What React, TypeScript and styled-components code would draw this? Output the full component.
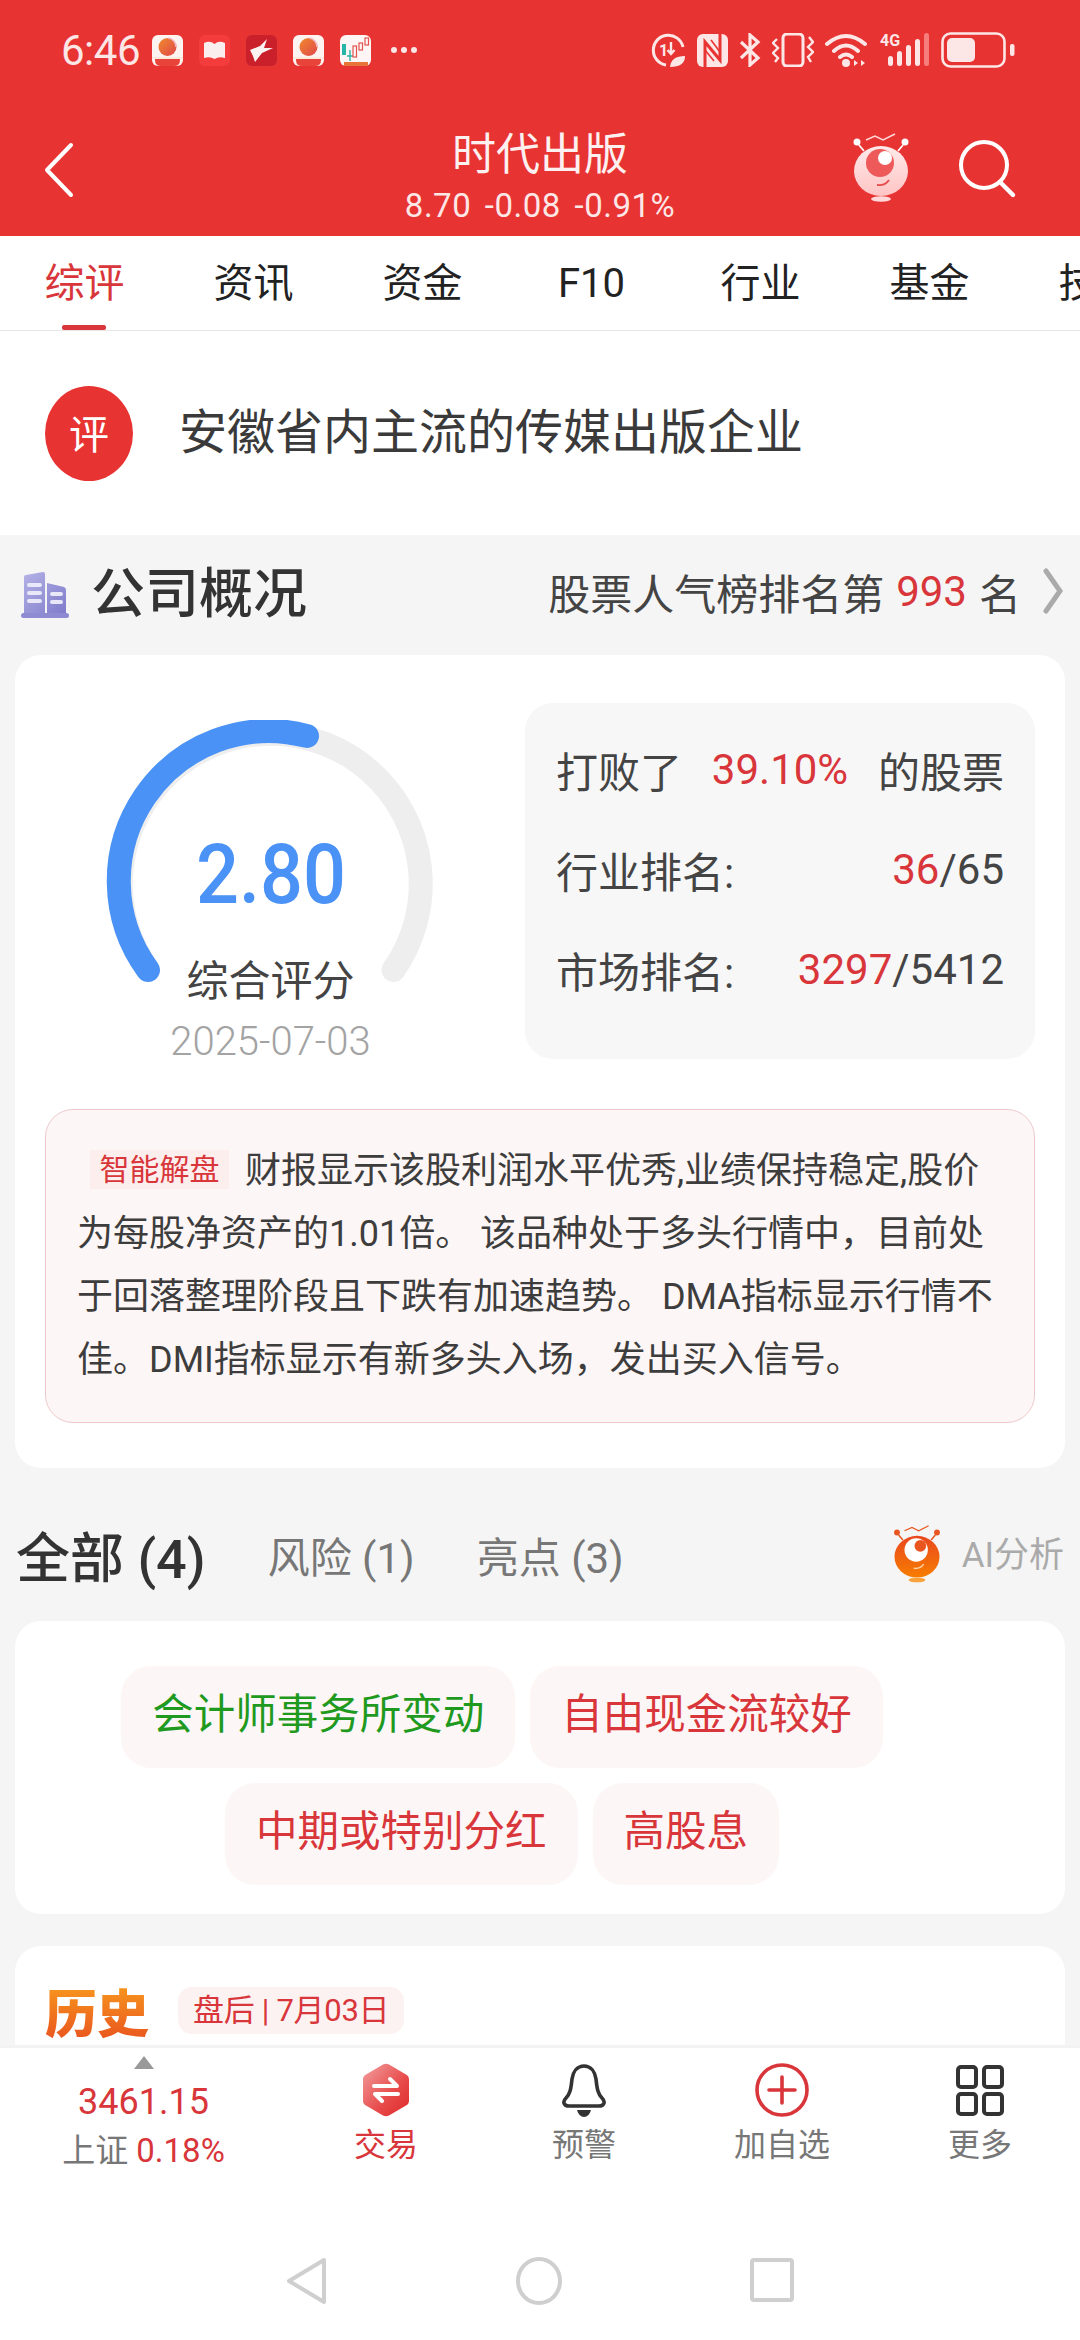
import styled, { createGlobalStyle } from 'styled-components';

const RED = '#d8363a';
const BRAND = '#e83333';
const SANS = `Roboto, "Noto Sans CJK SC", sans-serif`;

const GlobalStyle = createGlobalStyle`
  html, body { margin: 0; padding: 0; background: #fff; }
  body { font-family: ${SANS}; }
  * { box-sizing: border-box; }
`;

const Page = styled.div`
  width: 1080px;
  height: 2340px;
  display: flex;
  flex-direction: column;
  background: #f5f5f5;
  overflow: hidden;
`;

const Header = styled.header`
  background: ${BRAND};
  color: #fff;
  height: 236px;
`;

const StatusBar = styled.div`
  height: 100px;
  padding: 0 65px 0 61px;
  display: flex;
  align-items: center;
`;

const Clock = styled.span`
  font-size: 42px;
  font-weight: 400;
  color: #fde6e6;
  width: 91px;
  letter-spacing: -0.5px;
`;

const NoticeIcons = styled.div`
  display: flex;
  align-items: center;
  gap: 16px;
`;

const StatusIcons = styled.div`
  margin-left: auto;
  display: flex;
  align-items: center;
  gap: 11px;
`;

const TitleBar = styled.div`
  height: 136px;
  display: grid;
  grid-template-columns: 1fr auto 1fr;
  align-items: start;
`;

const BackButton = styled.div`
  padding: 42px 0 0 44px;
`;

const TitleBlock = styled.div`
  text-align: center;
`;

const StockName = styled.div`
  font-size: 44px;
  line-height: 52px;
  margin-top: 29px;
  color: #fdf0f0;
`;

const StockQuote = styled.div`
  font-size: 33px;
  line-height: 40px;
  margin-top: 5px;
  color: #fde6e6;
  letter-spacing: 0.5px;
  word-spacing: 5px;
`;

const TitleActions = styled.div`
  display: flex;
  justify-content: flex-end;
  align-items: flex-start;
  gap: 46px;
  padding: 33px 63px 0 0;
`;

const Tabs = styled.nav`
  height: 95px;
  display: flex;
  background: #fff;
  border-bottom: 1px solid #e6e6e6;
  overflow: hidden;
`;

const Tab = styled.div<{ $active?: boolean }>`
  flex: 0 0 169px;
  position: relative;
  text-align: center;
  font-size: 40px;
  line-height: 95px;
  color: ${(p) => (p.$active ? RED : '#222')};

  ${(p) =>
    p.$active &&
    `&::after {
      content: '';
      position: absolute;
      left: 62px;
      bottom: 0;
      width: 44px;
      height: 5px;
      border-radius: 2px;
      background: ${RED};
    }`}
`;

const Content = styled.main`
  flex: 1;
  min-height: 0;
  overflow: hidden;
`;

const Summary = styled.section`
  height: 204px;
  background: #fff;
  display: flex;
  align-items: center;
  padding-left: 45px;
  gap: 46px;
`;

const SummaryBadge = styled.div`
  width: 88px;
  height: 95px;
  border-radius: 50%;
  background: ${BRAND};
  color: #fff;
  font-size: 40px;
  padding-bottom: 3px;
  display: flex;
  align-items: center;
  justify-content: center;
`;

const SummaryText = styled.div`
  font-size: 48px;
  color: #3a3a3a;
  margin-bottom: 10px;
`;

const SectionHead = styled.div`
  height: 120px;
  display: flex;
  align-items: center;
  padding: 0 17px 8px 21px;

  > svg {
    margin-top: 8px;
  }
`;

const SectionTitle = styled.h2`
  margin: 0 0 4px 22px;
  font-size: 54px;
  font-weight: 500;
  color: #333;
`;

const RankLink = styled.div`
  margin-left: auto;
  display: flex;
  align-items: center;
  font-size: 42px;
  color: #444;
`;

const RedText = styled.span`
  color: ${RED};
`;

const RankNumber = styled(RedText)`
  margin: 0 12px;
`;

const Card = styled.section`
  margin: 0 15px;
  background: #fff;
  border-radius: 26px;
`;

const OverviewCard = styled(Card)`
  padding: 48px 30px 45px;
`;

const OverviewTop = styled.div`
  display: flex;
  align-items: flex-start;
`;

const GaugeColumn = styled.div`
  width: 480px;
  padding-right: 29px;
  display: flex;
  justify-content: center;
`;

const GaugeFace = styled.div`
  position: relative;
  width: 340px;
  text-align: center;

  svg {
    position: absolute;
    top: 17px;
    left: 0;
  }
`;

const Score = styled.div`
  position: relative;
  margin-top: 130px;
  font-size: 84px;
  line-height: 84px;
  font-weight: 500;
  color: #4a92f5;
  transform: scaleX(0.9);
`;

const ScoreLabel = styled.div`
  position: relative;
  margin-top: 40px;
  font-size: 42px;
  line-height: 50px;
  color: #444;
`;

const ScoreDate = styled.div`
  position: relative;
  margin-top: 13px;
  font-size: 40px;
  line-height: 44px;
  color: #a3a3a3;
  font-weight: 300;
`;

const RankPanel = styled.div`
  width: 510px;
  height: 356px;
  padding: 16px 31px 0;
  border-radius: 28px;
  background: #f7f7f7;
`;

const RankRow = styled.div`
  height: 100px;
  display: flex;
  align-items: center;
  justify-content: space-between;
  font-size: 42px;
  color: #444;
`;

const Insight = styled.div`
  margin-top: 45px;
  height: 314px;
  padding: 30px 30px 0 31px;
  border: 1px solid #eec9c9;
  border-radius: 28px;
  background: #fdf6f6;
  font-size: 36px;
  line-height: 63px;
  color: #3d3d3d;
  white-space: nowrap;
`;

const InsightTag = styled.span`
  display: inline-block;
  width: 139px;
  height: 39px;
  margin: 0 16px 0 13px;
  background: #fdeeee;
  color: ${RED};
  font-size: 30px;
  line-height: 39px;
  text-align: center;
  vertical-align: 3px;
`;

const FilterBar = styled.div`
  height: 153px;
  padding: 19px 16px 0;
  display: flex;
  align-items: center;
`;

const FilterItem = styled.span<{ $active?: boolean }>`
  font-size: ${(p) => (p.$active ? 54 : 42)}px;
  font-weight: ${(p) => (p.$active ? 500 : 400)};
  color: ${(p) => (p.$active ? '#333' : '#777')};
  margin-right: 62px;
`;

const AiLink = styled.div`
  margin-left: auto;
  margin-top: 2px;
  display: flex;
  align-items: center;
  gap: 20px;
  font-size: 35px;
  color: #aaa;
`;

const AiText = styled.span`
  margin-bottom: 8px;
`;

const ChipCard = styled(Card)`
  height: 293px;
  padding: 45px 116px 29px 40px;
  display: flex;
  flex-wrap: wrap;
  justify-content: center;
  align-content: flex-start;
  gap: 15px;
`;

const Chip = styled.span<{ $good?: boolean }>`
  height: 102px;
  padding: 0 31px;
  border-radius: 30px;
  background: #fdf6f6;
  color: ${(p) => (p.$good ? '#1f9a1f' : RED)};
  font-size: 41.5px;
  line-height: 98px;
`;

const HistoryCard = styled(Card)`
  margin-top: 32px;
  height: 140px;
  padding: 41px 30px 0;
  display: flex;
  align-items: flex-start;
  border-radius: 26px 26px 0 0;
`;

const HistoryMark = styled.span`
  font-size: 52px;
  line-height: 58px;
  font-weight: 900;
  background: linear-gradient(180deg, #f7941d, #e8501f);
  -webkit-background-clip: text;
  background-clip: text;
  color: transparent;
`;

const HistoryTag = styled.span`
  margin-left: 29px;
  height: 47px;
  padding: 0 15px;
  border-radius: 14px;
  background: #fdf2f2;
  color: ${RED};
  font-size: 31px;
  line-height: 47px;
  letter-spacing: -0.3px;
`;

const Footer = styled.footer`
  background: #fff;
  border-top: 3px solid #f3f3f3;
  height: 295px;
`;

const TabBar = styled.div`
  height: 165px;
  display: grid;
  grid-template-columns: 287px repeat(4, 198px);
`;

const IndexQuote = styled.div`
  padding-top: 8px;
  text-align: center;
`;

const IndexValue = styled.div`
  margin-top: 13px;
  font-size: 36px;
  line-height: 40px;
  color: ${RED};
`;

const IndexName = styled.div`
  margin-top: 9px;
  font-size: 33px;
  line-height: 40px;
  color: #777;
`;

const BarItem = styled.div<{ $active?: boolean }>`
  padding-top: 15px;
  display: flex;
  flex-direction: column;
  align-items: center;
  font-size: 32px;
  line-height: 40px;
  color: ${(p) => (p.$active ? RED : '#777')};

  svg {
    margin-bottom: 8px;
  }
`;

const SystemBar = styled.div`
  height: 127px;
  display: flex;
  justify-content: center;
  align-items: flex-start;
  gap: 188px;
  padding: 44px 0 0 0;
`;

const Building = () => (
  <svg width="48" height="46" viewBox="0 0 48 46">
    <defs>
      <linearGradient id="bld" x1="0" y1="0" x2="1" y2="1">
        <stop offset="0" stopColor="#b4b2e6" />
        <stop offset="1" stopColor="#7f7bcb" />
      </linearGradient>
    </defs>
    <path d="M3 5 Q3 3 5 3 L22 0 Q24 0 24 2 V42 H3Z M26 11 L43 15 Q45 16 45 18 V42 H26Z" fill="url(#bld)" />
    <rect y="41" width="48" height="5" rx="2.5" fill="#8f8bd3" />
    <path d="M8 13h11M8 21h11M8 29h11M31 22h9M31 30h9" stroke="#e9e8f8" strokeWidth="4" strokeLinecap="round" />
  </svg>
);

const Chevron = () => (
  <svg width="20" height="46" viewBox="0 0 20 46" style={{ marginLeft: 22 }}>
    <path d="M3 3 L17 23 L3 43" fill="none" stroke="#aaa" strokeWidth="5" strokeLinecap="round" />
  </svg>
);

const Gauge = () => (
  <svg width="340" height="300" viewBox="0 0 340 300">
    <g transform="translate(-100 -720)" fill="none" strokeWidth="24" strokeLinecap="round">
      <path d="M147 970 A150 150 0 1 1 392.5 970" stroke="#eeeeee" />
      <path d="M147 970 A150 150 0 0 1 306 736" stroke="#4a92f5" />
    </g>
  </svg>
);

const Robot = ({ orange, width, height }: { orange?: boolean; width: number; height: number }) => {
  const id = orange ? 'robotOrange' : 'robotPink';
  const tip = orange ? '#e9551f' : '#ffffff';
  const line = orange ? '#e9551f' : '#ffd9d9';
  const eye = orange ? '#ffffff' : '#ee5a5a';
  const pupil = orange ? '#e9551f' : '#fff';
  return (
    <svg width={width} height={height} viewBox="0 0 60 72">
      <defs>
        <linearGradient id={id} x1="0" y1="0" x2="0" y2="1">
          <stop offset="0" stopColor={orange ? '#e9481f' : '#ffeaea'} />
          <stop offset="1" stopColor={orange ? '#f77d00' : '#ffc4c4'} />
        </linearGradient>
      </defs>
      <circle cx="6" cy="9" r="3.5" fill={tip} />
      <circle cx="54" cy="9" r="3.5" fill={tip} />
      <path d="M8 12 L13 18 M52 12 L47 18" stroke={tip} strokeWidth="1.8" />
      <path d="M15 7 L24 3 L32 7 L44 1" fill="none" stroke={line} strokeWidth="1.4" />
      <ellipse cx="30" cy="38" rx="27" ry="25" fill={`url(#${id})`} />
      <circle cx="29" cy="30" r="14" fill={eye} />
      <circle cx="34" cy="25" r="7" fill={pupil} />
      <path d="M26 52 Q34 53 38 47" fill="none" stroke={orange ? '#ffd0a0' : '#e84a4a'} strokeWidth="1.8" />
      <ellipse cx="30" cy="66" rx="10" ry="2.8" fill={orange ? '#f9a23c' : '#ffd9d9'} />
    </svg>
  );
};

const SquircleApp = ({ children, bg }: { children: React.ReactNode; bg: string }) => (
  <svg width="31" height="31" viewBox="0 0 31 31">
    <rect width="31" height="31" rx="6" fill={bg} />
    {children}
  </svg>
);

const PeachApp = ({ id }: { id: string }) => (
  <SquircleApp bg="#fdf4f2">
    <defs>
      <linearGradient id={id} x1="0" y1="0" x2="1" y2="1">
        <stop offset="0" stopColor="#f08a2c" />
        <stop offset="1" stopColor="#e0474c" />
      </linearGradient>
    </defs>
    <circle cx="15.5" cy="12" r="9" fill={`url(#${id})`} />
    <path d="M16 3 A9 9 0 0 1 24 12" fill="none" stroke="#f5b5c0" strokeWidth="1.5" />
    <path d="M3 24 H28 V25 Q28 31 22 31 H9 Q3 31 3 25Z" fill="#e8443a" />
    <path d="M0 23 H31" stroke="#fbe2c8" strokeWidth="1" />
  </SquircleApp>
);

const NoticeRow = () => (
  <NoticeIcons>
    <PeachApp id="peachA" />
    <SquircleApp bg="#f43c3c">
      <path d="M5 8 Q11 5 15.5 9 Q20 5 26 8 V23 Q20 21 15.5 24 Q11 21 5 23Z" fill="#fbeeee" />
    </SquircleApp>
    <SquircleApp bg="#c9202c">
      <path d="M4 15 L14 11 L21 4 L18 13 L27 13 L16 18 L9 27 Q7 20 4 15Z" fill="#fdf2f2" />
    </SquircleApp>
    <PeachApp id="peachB" />
    <SquircleApp bg="#fdf6f4">
      <rect x="2" y="9" width="4" height="11" fill="#27b5a8" />
      <path d="M10 15v11M7 21h6" stroke="#27b5a8" strokeWidth="1.4" />
      <g fill="none" stroke="#e2554f" strokeWidth="1.2">
        <rect x="13" y="11" width="3.5" height="11" />
        <rect x="19" y="8" width="3.5" height="7" />
        <rect x="25" y="3" width="3.5" height="7" />
      </g>
      <rect x="4" y="27" width="24" height="4" fill="#e8743a" />
    </SquircleApp>
    <svg width="26" height="8" viewBox="0 0 26 8" style={{ marginLeft: 4 }}>
      <g fill="#fbe6e6">
        <circle cx="3" cy="4" r="3" />
        <circle cx="13" cy="4" r="3" />
        <circle cx="23" cy="4" r="3" />
      </g>
    </svg>
  </NoticeIcons>
);

const StatusRow = () => (
  <StatusIcons>
    <svg width="35" height="35" viewBox="0 0 35 35">
      <path d="M32 14 A15 15 0 1 0 15 32" fill="none" stroke="#fde6e6" strokeWidth="3" />
      <text x="8" y="23" fontSize="16" fontWeight="700" fill="#fde6e6" fontFamily="Roboto">1</text>
      <path d="M20 9v12M16.5 17l3.5 4 3.5-4" fill="none" stroke="#fde6e6" strokeWidth="2.4" />
      <path d="M19 34 Q20 23 34 23 Q34 34 19 34Z" fill="#fde6e6" />
    </svg>
    <svg width="31" height="33" viewBox="0 0 31 33">
      <rect width="31" height="33" rx="6" fill="#fde6e6" />
      <path d="M8 33V8L23 26V0" fill="none" stroke={BRAND} strokeWidth="3" />
      <path d="M14 6L23 18M8 16L17 27" fill="none" stroke={BRAND} strokeWidth="1.6" />
    </svg>
    <svg width="22" height="34" viewBox="0 0 22 34">
      <path d="M2 9 L19 25 L11 32 V2 L19 9 L2 25" fill="none" stroke="#fde6e6" strokeWidth="3.2" />
    </svg>
    <svg width="42" height="34" viewBox="0 0 42 34">
      <rect x="11" y="1" width="20" height="32" rx="4" fill="none" stroke="#fde6e6" strokeWidth="3" />
      <path d="M5 6 L1 10 L6 15 L1 20 L6 25 L3 29 M37 4 L41 9 L36 14 L41 19 L36 24 L39 29" fill="none" stroke="#fde6e6" strokeWidth="2.4" />
    </svg>
    <svg width="44" height="34" viewBox="0 0 44 34">
      <path d="M2 11 Q21 -5 40 11 M9 18 Q21 7 33 18 M15 24 Q21 19 27 24" fill="none" stroke="#fde6e6" strokeWidth="4" strokeLinecap="round" />
      <circle cx="21" cy="30" r="4" fill="#fde6e6" />
      <path d="M29 27 V33 L33 30Z M36 27 V33 L40 30Z" fill="#fde6e6" />
    </svg>
    <svg width="50" height="36" viewBox="0 0 50 36">
      <text x="0" y="14" fontSize="16" fontWeight="700" fill="#fde6e6" fontFamily="Roboto">4G</text>
      <g fill="#fde6e6">
        <rect x="8" y="24" width="5" height="10" rx="2.5" />
        <rect x="17" y="19" width="5" height="15" rx="2.5" />
        <rect x="26" y="13" width="5" height="21" rx="2.5" />
        <rect x="35" y="7" width="5" height="27" rx="2.5" />
      </g>
      <rect x="44" y="1" width="5" height="33" rx="2.5" fill="#f77d7d" />
    </svg>
    <svg width="74" height="36" viewBox="0 0 74 36">
      <rect x="1.5" y="1.5" width="62" height="33" rx="8" fill="none" stroke="#fde6e6" strokeWidth="2.6" />
      <rect x="6" y="6" width="28" height="24" rx="5" fill="#fde6e6" />
      <rect x="69" y="12" width="4.5" height="12" rx="2" fill="#fde6e6" />
    </svg>
  </StatusIcons>
);

const TradeIcon = () => (
  <svg width="48" height="54" viewBox="0 0 48 54">
    <defs>
      <linearGradient id="trade" x1="0" y1="0" x2="1" y2="1">
        <stop offset="0" stopColor="#f2a0a0" />
        <stop offset="0.6" stopColor="#e84a4a" />
        <stop offset="1" stopColor="#de2a2a" />
      </linearGradient>
    </defs>
    <path d="M21 1.5 Q24 0 27 1.5 L44 11.5 Q47 13 47 16.5 V37.5 Q47 41 44 42.5 L27 52.5 Q24 54 21 52.5 L4 42.5 Q1 41 1 37.5 V16.5 Q1 13 4 11.5Z" fill="url(#trade)" />
    <path d="M12 23 H35 L28 16 M36 31 H13 L20 38" fill="none" stroke="#fff" strokeWidth="4" strokeLinecap="round" strokeLinejoin="round" />
  </svg>
);

const BellIcon = () => (
  <svg width="46" height="54" viewBox="0 0 46 54">
    <path d="M23 3 C30 3 34 9 35 16 C36 26 37 31 41 35 C45 39 43 43 38 43 H8 C3 43 1 39 5 35 C9 31 10 26 11 16 C12 9 16 3 23 3Z" fill="none" stroke="#333" strokeWidth="3.6" />
    <path d="M16 47 H30 Q28 54 23 54 Q18 54 16 47Z" fill="#333" />
  </svg>
);

const AddIcon = () => (
  <svg width="54" height="54" viewBox="0 0 54 54">
    <circle cx="27" cy="27" r="25" fill="none" stroke={RED} strokeWidth="3.6" />
    <path d="M14 27 H40 M27 14 V40" stroke={RED} strokeWidth="3.6" strokeLinecap="round" />
  </svg>
);

const GridIcon = () => (
  <svg width="48" height="54" viewBox="0 0 48 54">
    <g fill="none" stroke="#333" strokeWidth="4">
      <rect x="2" y="4" width="18" height="20" rx="3" />
      <rect x="28" y="4" width="18" height="20" rx="3" />
      <rect x="2" y="31" width="18" height="20" rx="3" />
      <rect x="28" y="31" width="18" height="20" rx="3" />
    </g>
  </svg>
);

export default function App() {
  return (
    <Page>
      <GlobalStyle />
      <Header>
        <StatusBar>
          <Clock>6:46</Clock>
          <NoticeRow />
          <StatusRow />
        </StatusBar>
        <TitleBar>
          <BackButton>
            <svg width="30" height="56" viewBox="0 0 30 56">
              <path d="M27 3 L3 28 L27 53" fill="none" stroke="#fff" strokeWidth="4" strokeLinecap="round" strokeLinejoin="round" />
            </svg>
          </BackButton>
          <TitleBlock>
            <StockName>时代出版</StockName>
            <StockQuote>8.70 -0.08 -0.91%</StockQuote>
          </TitleBlock>
          <TitleActions>
            <Robot width={60} height={72} />
            <svg width="60" height="60" viewBox="0 0 60 60" style={{ marginTop: 6 }}>
              <circle cx="27" cy="26" r="23" fill="none" stroke="#fff" strokeWidth="4" />
              <path d="M43 43 L56 56" stroke="#fff" strokeWidth="4.4" strokeLinecap="round" />
            </svg>
          </TitleActions>
        </TitleBar>
      </Header>
      <Tabs>
        <Tab $active>综评</Tab>
        <Tab>资讯</Tab>
        <Tab>资金</Tab>
        <Tab>F10</Tab>
        <Tab>行业</Tab>
        <Tab>基金</Tab>
        <Tab>技术</Tab>
      </Tabs>
      <Content>
        <Summary>
          <SummaryBadge>评</SummaryBadge>
          <SummaryText>安徽省内主流的传媒出版企业</SummaryText>
        </Summary>
        <SectionHead>
          <Building />
          <SectionTitle>公司概况</SectionTitle>
          <RankLink>
            股票人气榜排名第<RankNumber>993</RankNumber>名
            <Chevron />
          </RankLink>
        </SectionHead>
        <OverviewCard>
          <OverviewTop>
            <GaugeColumn>
              <GaugeFace>
                <Gauge />
                <Score>2.80</Score>
                <ScoreLabel>综合评分</ScoreLabel>
                <ScoreDate>2025-07-03</ScoreDate>
              </GaugeFace>
            </GaugeColumn>
            <RankPanel>
              <RankRow>
                <span>打败了</span>
                <RedText>39.10%</RedText>
                <span>的股票</span>
              </RankRow>
              <RankRow>
                <span>行业排名:</span>
                <span>
                  <RedText>36</RedText>/65
                </span>
              </RankRow>
              <RankRow>
                <span>市场排名:</span>
                <span>
                  <RedText>3297</RedText>/5412
                </span>
              </RankRow>
            </RankPanel>
          </OverviewTop>
          <Insight>
            <InsightTag>智能解盘</InsightTag>财报显示该股利润水平优秀,业绩保持稳定,股价
            <br />
            为每股净资产的1.01倍。 该品种处于多头行情中，目前处
            <br />
            于回落整理阶段且下跌有加速趋势。 DMA指标显示行情不
            <br />
            佳。DMI指标显示有新多头入场，发出买入信号。
          </Insight>
        </OverviewCard>
        <FilterBar>
          <FilterItem $active>全部 (4)</FilterItem>
          <FilterItem>风险 (1)</FilterItem>
          <FilterItem>亮点 (3)</FilterItem>
          <AiLink>
            <Robot orange width={50} height={60} />
            <AiText>AI分析</AiText>
          </AiLink>
        </FilterBar>
        <ChipCard>
          <Chip $good>会计师事务所变动</Chip>
          <Chip>自由现金流较好</Chip>
          <Chip>中期或特别分红</Chip>
          <Chip>高股息</Chip>
        </ChipCard>
        <HistoryCard>
          <HistoryMark>历史</HistoryMark>
          <HistoryTag>盘后 | 7月03日</HistoryTag>
        </HistoryCard>
      </Content>
      <Footer>
        <TabBar>
          <IndexQuote>
            <svg width="20" height="13" viewBox="0 0 20 13" style={{ display: 'block', margin: '0 auto' }}>
              <path d="M10 0 L20 13 H0Z" fill="#999" />
            </svg>
            <IndexValue>3461.15</IndexValue>
            <IndexName>
              上证 <RedText>0.18%</RedText>
            </IndexName>
          </IndexQuote>
          <BarItem $active>
            <TradeIcon />
            交易
          </BarItem>
          <BarItem>
            <BellIcon />
            预警
          </BarItem>
          <BarItem>
            <AddIcon />
            加自选
          </BarItem>
          <BarItem>
            <GridIcon />
            更多
          </BarItem>
        </TabBar>
        <SystemBar>
          <svg width="42" height="48" viewBox="0 0 42 48">
            <path d="M38 3 V45 L3 24Z" fill="none" stroke="#cfcfcf" strokeWidth="4" strokeLinejoin="round" />
          </svg>
          <svg width="46" height="48" viewBox="0 0 46 48">
            <ellipse cx="23" cy="24" rx="21" ry="22" fill="none" stroke="#cfcfcf" strokeWidth="4" />
          </svg>
          <svg width="44" height="46" viewBox="0 0 44 46">
            <rect x="2" y="3" width="40" height="40" rx="2" fill="none" stroke="#cfcfcf" strokeWidth="4" />
          </svg>
        </SystemBar>
      </Footer>
    </Page>
  );
}
